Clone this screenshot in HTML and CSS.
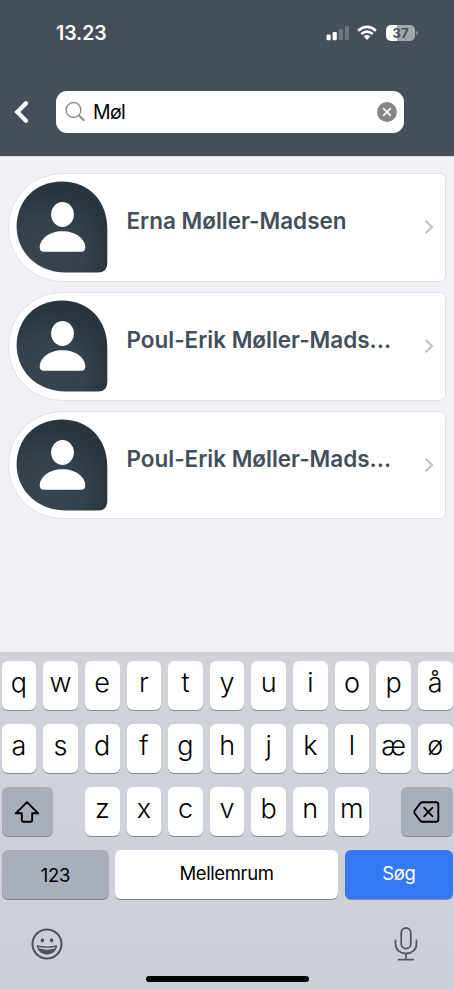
FILE: index.html
```html
<!DOCTYPE html>
<html lang="da">
<head>
<meta charset="utf-8">
<title>Søg</title>
<link rel="stylesheet" href="styles.css">
</head>
<body>
<svg width="0" height="0" class="defs">
  <defs>
    <radialGradient id="shade" cx=".35" cy=".8" r=".85">
      <stop offset="0" stop-color="#374650"/>
      <stop offset=".45" stop-color="#33424d"/>
      <stop offset=".85" stop-color="#29343c"/>
    </radialGradient>
    <symbol id="avatar" viewBox="0 0 92 92">
      <path fill="url(#shade)" d="M46 .5C19 .5 .6 20 .6 45.500C.6 70 20 91.500 50 91.500H82Q91.300 91.500 91.300 82V48C91.300 20 73 .5 46 .5Z"/>
      <ellipse cx="46.500" cy="33.500" rx="11.400" ry="12.400" fill="#fff"/>
      <path fill="#fff" d="M46.500 50.200C32.500 50.200 23.700 58.500 23.700 66.500Q23.700 70.700 28 70.700H65Q69.300 70.700 69.300 66.500C69.300 58.500 60.500 50.200 46.500 50.200Z"/>
    </symbol>
    <symbol id="chevron" viewBox="0 0 10 16"><path d="M1.500 1.700L8 8L1.500 14.300" fill="none" stroke="#c3c3c6" stroke-width="2.200"/></symbol>
  </defs>
</svg>
<div class="screen">
  <header class="header">
    <div class="status">
      <span class="time">13.23</span>
      <div class="indicators">
        <svg width="24" height="16" viewBox="0 0 24 16"><g fill="#fff"><rect x=".5" y="9.500" width="4.200" height="5.700" rx="1.200"/><rect x="6.600" y="7" width="4.200" height="8.200" rx="1.200"/><g opacity=".22"><rect x="12.700" y="4" width="4.200" height="11.200" rx="1.200"/><rect x="18.800" y=".8" width="4.200" height="14.400" rx="1.200"/></g></g></svg>
        <svg class="wifi" width="20" height="16" viewBox="0 0 20 16"><g fill="none" stroke="#fff" stroke-width="2.600"><path d="M1.100 5.700Q10 -2 18.900 5.700"/><path d="M4.300 9.100Q10 4.300 15.700 9.100"/></g><path fill="#fff" d="M6.600 11.300Q10 8.600 13.400 11.300L10 14.900Z"/></svg>
        <div class="battery"><span class="level">37</span><i class="nub"></i></div>
      </div>
    </div>
    <div class="searchbar">
      <svg class="back" width="16" height="24" viewBox="0 0 16 24"><path d="M13 3.200L4.300 12L13 20.800" fill="none" stroke="#fff" stroke-width="4.200" stroke-linecap="round" stroke-linejoin="miter"/></svg>
      <div class="field">
        <svg width="22" height="22" viewBox="0 0 22 22" fill="none" stroke="#929292"><circle cx="8.500" cy="9" r="7.400" stroke-width="1.500"/><path d="M13.800 14.300L19.300 19.800" stroke-width="2.200"/></svg>
        <span class="query">Møl</span>
        <svg class="clear" width="20" height="20" viewBox="0 0 20 20"><circle cx="10" cy="10" r="9.900" fill="#858585"/><path d="M6.200 6.200L13.800 13.800M13.800 6.200L6.200 13.800" stroke="#fff" stroke-width="1.700"/></svg>
      </div>
    </div>
  </header>
  <main class="results">
    <div class="card"><svg class="avatar"><use href="#avatar"/></svg><span class="name">Erna Møller-Madsen</span><svg class="chevron"><use href="#chevron"/></svg></div>
    <div class="card"><svg class="avatar"><use href="#avatar"/></svg><span class="name">Poul-Erik Møller-Mads...</span><svg class="chevron"><use href="#chevron"/></svg></div>
    <div class="card"><svg class="avatar"><use href="#avatar"/></svg><span class="name">Poul-Erik Møller-Mads...</span><svg class="chevron"><use href="#chevron"/></svg></div>
  </main>
  <section class="keyboard">
    <div class="row"><b>q</b><b>w</b><b>e</b><b>r</b><b>t</b><b>y</b><b>u</b><b>i</b><b>o</b><b>p</b><b>å</b></div>
    <div class="row"><b>a</b><b>s</b><b>d</b><b>f</b><b>g</b><b>h</b><b>j</b><b>k</b><b>l</b><b>æ</b><b>ø</b></div>
    <div class="row third">
      <b class="grey"><svg width="26" height="24" viewBox="0 0 26 24"><path d="M13 2.200L24.200 13.300H18.200V20.300Q18.200 21.700 16.800 21.700H9.200Q7.800 21.700 7.800 20.300V13.300H1.800Z" fill="none" stroke="#000" stroke-width="1.900" stroke-linejoin="round"/></svg></b>
      <div class="letters"><b>z</b><b>x</b><b>c</b><b>v</b><b>b</b><b>n</b><b>m</b></div>
      <b class="grey"><svg width="27" height="22" viewBox="0 0 27 22" fill="none" stroke="#000" stroke-width="1.900" stroke-linecap="round" stroke-linejoin="round"><path d="M9.300 1.200H23Q25.300 1.200 25.300 3.500V18.500Q25.300 20.800 23 20.800H9.300Q8.300 20.800 7.500 20L1.800 12.500Q.9 11 1.800 9.500L7.500 2Q8.300 1.200 9.300 1.200Z"/><path d="M11.300 6.800L19.300 15.200M19.300 6.800L11.300 15.200"/></svg></b>
    </div>
    <div class="row bottom"><b class="grey word">123</b><b class="word space">Mellemrum</b><b class="blue word">Søg</b></div>
    <div class="tools">
      <svg width="32" height="32" viewBox="0 0 32 32"><circle cx="16" cy="16" r="14.500" fill="none" stroke="#4e525b" stroke-width="2"/><ellipse cx="11.400" cy="12.300" rx="1.700" ry="2.100" fill="#4e525b"/><ellipse cx="20.600" cy="12.300" rx="1.700" ry="2.100" fill="#4e525b"/><path d="M5.800 17.300Q16 19.600 26.200 17.300C25.800 22.800 21.400 26.500 16 26.500S6.200 22.800 5.800 17.300Z" fill="#4e525b"/><path d="M7.500 18.900Q16 20.800 24.500 18.900L23.600 20.600Q16 22.700 8.400 20.600Z" fill="#cdd1da"/></svg>
      <svg width="24" height="36" viewBox="0 0 24 36" fill="none" stroke="#565960" stroke-width="1.800" stroke-linecap="round"><rect x="7.200" y="2" width="9.600" height="20.500" rx="4.800"/><path d="M1.500 14.500V17.500C1.500 24 6 27.500 12 27.500S22.500 24 22.500 17.500V14.500M12 27.500V33.700M4.800 33.700H19.200"/></svg>
    </div>
    <div class="home"></div>
  </section>
</div>
</body>
</html>
```
FILE: styles.css
```css
* { box-sizing: border-box; }
body { margin: 0; font-family: Inter, "Liberation Sans", sans-serif; }
.defs { position: absolute; }
.screen { width: 454px; height: 989px; display: flex; flex-direction: column; background: #f2f0f6; overflow: hidden; }
svg { display: block; flex: none; }

.header { height: 156px; background: #454f59; }
.status { height: 91px; padding: 25px 36px 0 56px; display: flex; align-items: flex-start; justify-content: space-between; }
.time { color: #fff; font-size: 19.5px; line-height: 17px; font-weight: 600; letter-spacing: -.1px; }
.indicators { display: flex; align-items: flex-start; }
.wifi { margin-left: 7px; }
.battery { position: relative; width: 29px; height: 16px; margin: 0 3px 0 9px; border-radius: 5px; background: linear-gradient(90deg, #fff 11px, #a2a7ac 11px); }
.level { display: block; text-align: center; font-size: 13px; line-height: 16px; font-weight: 700; color: #454f59; }
.nub { position: absolute; right: -3px; top: 6px; width: 2px; height: 4px; border-radius: 0 2px 2px 0; background: #858c93; }

.searchbar { display: flex; align-items: center; height: 42px; padding-left: 13px; }
.back { margin-right: 27px; }
.field { width: 348px; height: 42px; border-radius: 11px; background: #fff; display: flex; align-items: center; padding: 0 7px 0 9px; }
.query { font-size: 19.5px; line-height: 24px; margin-left: 6px; letter-spacing: -.6px; }
.clear { margin-left: auto; }

.results { flex: 1; padding: 16px 8px 0 7.5px; display: flex; flex-direction: column; gap: 10px; border-top: 1px solid #dddde2; }
.card { height: 108.8px; border: 1px solid #e0e0e7; border-radius: 54px 6px 6px 54px; background: #fff; display: flex; align-items: center; padding: 0 11px 0 7.5px; flex: none; }
.avatar { width: 92px; height: 92px; }
.name { margin: -12.2px 0 0 18.5px; font-size: 22.5px; line-height: 28px; font-weight: 600; color: #434f5a; white-space: nowrap; letter-spacing: -.02px; }
.chevron { width: 10px; height: 16px; margin-left: auto; }

.keyboard { height: 337px; padding: 9px 1.4px 0 1.6px; background: linear-gradient(#d1d2d8, #cfd2da 50%, #cccfd8); display: flex; flex-direction: column; }
.row { display: grid; grid-template-columns: repeat(11, 1fr); column-gap: 7px; height: 49px; margin-bottom: 14px; flex: none; }
.row b { display: flex; align-items: center; justify-content: center; height: 49px; padding-bottom: 5px; border-radius: 6px; background: #fff; box-shadow: 0 1px 0 #898a8d; font-size: 27px; line-height: 32px; font-weight: 350; color: #000; }
.third { display: flex; justify-content: space-between; }
.letters { display: grid; grid-template-columns: repeat(7, 34.6px); column-gap: 7px; }
.row .grey { background: #a8aeba; }
.third .grey { width: 51.5px; padding: 0; }
.bottom { grid-template-columns: 107.5px 223.5px 107.5px; column-gap: 0; justify-content: space-between; margin-bottom: 0; }
.row .word { font-size: 18.5px; font-weight: 400; padding-bottom: 3px; letter-spacing: -.3px; }
.row .space { letter-spacing: -.4px; margin: 0 .6px 0 -.6px; }
.row .word.grey { padding: 0; }
.row .blue { background: #3478f6; color: #fff; }
.tools { display: flex; justify-content: space-between; align-items: center; height: 38px; margin: 26px 35px 0 29.4px; }
.home { width: 163px; height: 6px; border-radius: 3px; background: #000; margin: 13px auto 0 144px; }
```
